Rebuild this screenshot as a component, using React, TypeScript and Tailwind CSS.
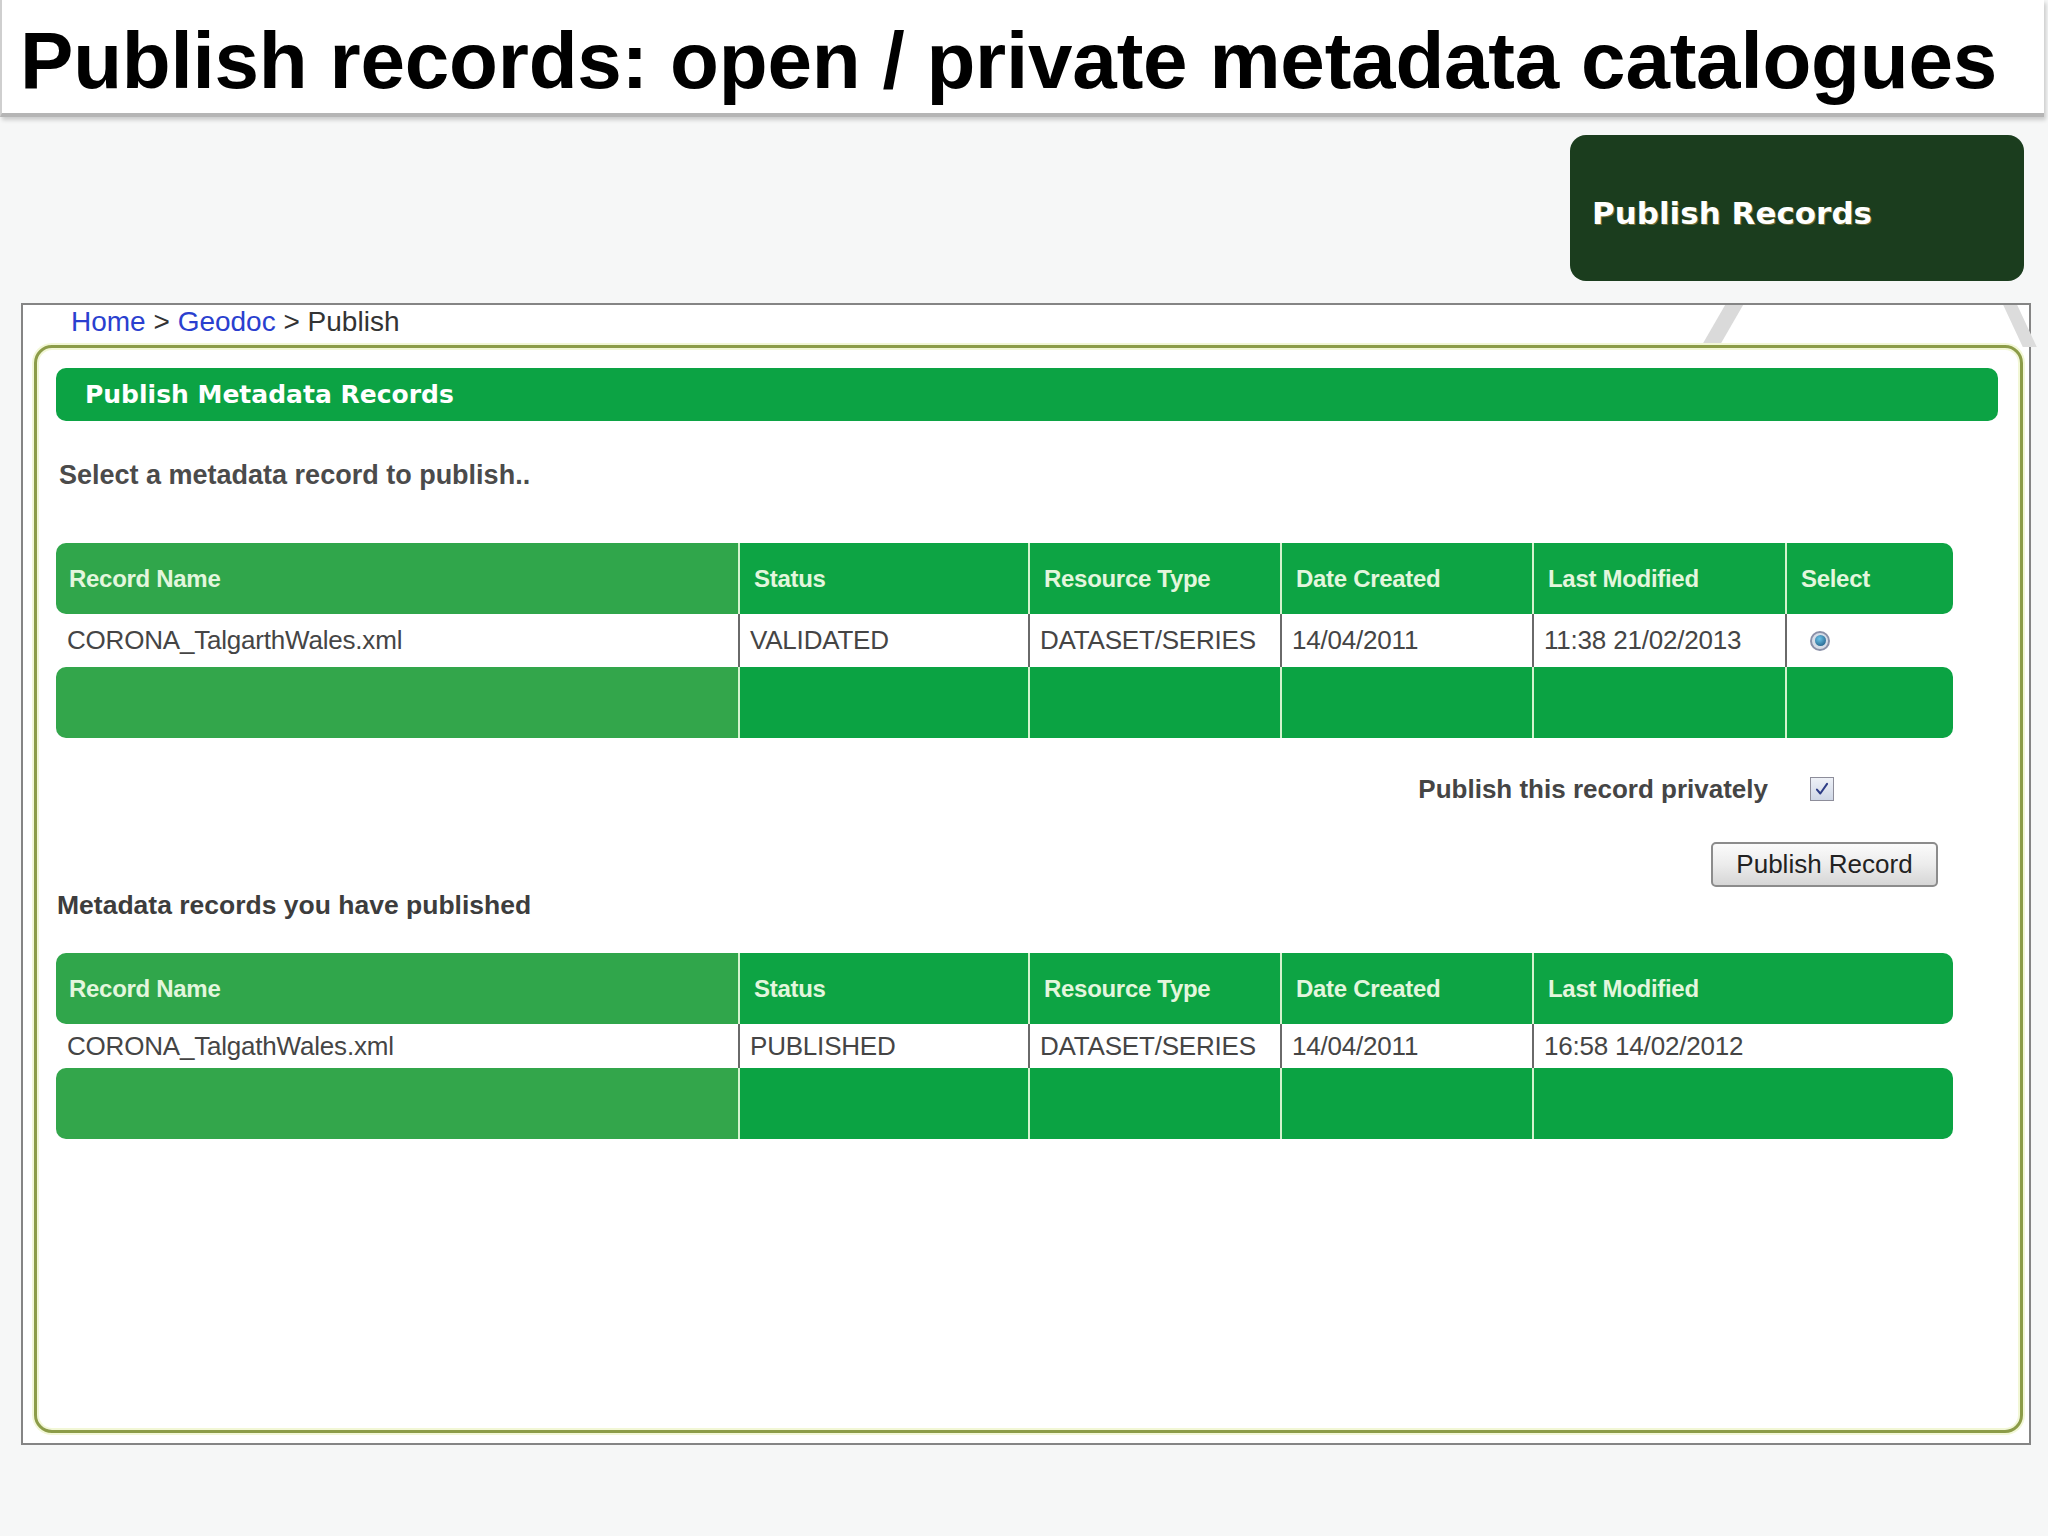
import React from "react";

const cols1 = "grid grid-cols-[682px_290px_252px_252px_253px_168px]";
const cols2 = "grid grid-cols-[682px_290px_252px_252px_421px]";

interface TableProps {
  cols: string;
  headers: string[];
  values: string[];
  rowH: string;
  radio?: boolean;
}

function RecordTable({ cols, headers, values, rowH, radio }: TableProps) {
  return (
    <div className="ml-[19px] w-[1897px]">
      {/* header bar */}
      <div className={`${cols} h-[71px] overflow-hidden rounded-[10px]`}>
        {headers.map((h, i) => (
          <div
            key={h}
            className={
              i === 0
                ? "flex items-center bg-[#30a64b] pl-[13px]"
                : "flex items-center border-l-2 border-[#d3f3cd] bg-[#0da444] pl-[14px]"
            }
          >
            <span className="text-[24px] font-bold tracking-[-0.3px] text-[#e3f6dd]">
              {h}
            </span>
          </div>
        ))}
      </div>

      {/* data row */}
      <div className={`${cols} ${rowH} bg-white`}>
        {values.map((v, i) => (
          <div
            key={i}
            className={
              i === 0
                ? "flex items-center pl-[11px]"
                : "flex items-center border-l-2 border-[#6a6a6a] pl-[10px]"
            }
          >
            <span className="text-[26px] tracking-[-0.2px] text-[#454545]">{v}</span>
          </div>
        ))}
        {radio && (
          <div className="flex items-center border-l-2 border-[#6a6a6a] pl-[23px]">
            <span className="flex h-[20px] w-[20px] items-center justify-center rounded-full border-2 border-[#8a90a8] bg-[#d6dde8]">
              <span className="h-[11px] w-[11px] rounded-full bg-[radial-gradient(circle_at_40%_35%,#6cc4ea,#174f78)]" />
            </span>
          </div>
        )}
      </div>

      {/* footer bar */}
      <div className={`${cols} h-[71px] overflow-hidden rounded-[10px]`}>
        {headers.map((h, i) => (
          <div
            key={h}
            className={
              i === 0
                ? "bg-[#33a64b]"
                : "border-l-2 border-[#d3f3cd] bg-[#0ba343]"
            }
          />
        ))}
      </div>
    </div>
  );
}

export default function App() {
  return (
    <div className="relative h-[1536px] w-[2048px] overflow-hidden bg-[#f6f7f7] font-['Liberation_Sans',Arial,sans-serif]">
      {/* Slide title */}
      <div className="h-[117px] w-[2044px] border-b-4 border-l-2 border-[#b5b5b5] border-l-[#cfcfcf] bg-white pl-[18px] pt-[21px] shadow-[2px_3px_4px_rgba(0,0,0,0.18)]">
        <h1 className="text-[80px] font-bold leading-none tracking-[-0.2px] text-black">
          Publish records: open / private metadata catalogues
        </h1>
      </div>

      {/* Dark label */}
      <div className="mt-[18px] flex justify-end pr-[24px]">
        <div className="flex h-[146px] w-[454px] items-center rounded-[16px] bg-[#1b3d1e] pl-[22px] pt-[10px]">
          <span className="font-['DejaVu_Sans',sans-serif] text-[31px] font-bold text-white [text-shadow:1px_1px_0_rgba(200,160,80,0.5)]">
            Publish Records
          </span>
        </div>
      </div>

      {/* Screenshot panel */}
      <div className="relative ml-[21px] mt-[22px] h-[1142px] w-[2010px] border-2 border-[#858585] bg-white">
        <div className="absolute left-[1690px] top-0 h-[42px] w-[18px] skew-x-[-30deg] bg-[#dadada]" />
        <div className="absolute left-[1990px] top-0 h-[42px] w-[14px] skew-x-[25deg] bg-[#dcdcdc]" />

        <div className="relative h-[40px] pl-[48px] pt-[3px] text-[28px] leading-none">
          <span className="text-[#2a3fcf]">Home</span>
          <span className="text-[#333]"> &gt; </span>
          <span className="text-[#2a3fcf]">Geodoc</span>
          <span className="text-[#333]"> &gt; Publish</span>
        </div>

        <div className="relative ml-[11px] h-[1088px] w-[1989px] rounded-[18px] border-[3px] border-[#8c9c48] bg-white shadow-[inset_0_0_0_2px_#f2f7d6,0_0_0_2px_#f2f7d6]">
          <div className="ml-[19px] mt-[20px] flex h-[53px] w-[1942px] items-center rounded-[10px] bg-[#0ca344] pl-[29px]">
            <span className="font-['DejaVu_Sans',sans-serif] text-[25px] font-bold text-white">
              Publish Metadata Records
            </span>
          </div>

          <p className="ml-[22px] mt-[39px] h-[30px] text-[27px] font-bold leading-[30px] text-[#4b4b4b]">
            Select a metadata record to publish..
          </p>

          <div className="mt-[53px]">
            <RecordTable
              cols={cols1}
              headers={[
                "Record Name",
                "Status",
                "Resource Type",
                "Date Created",
                "Last Modified",
                "Select",
              ]}
              values={[
                "CORONA_TalgarthWales.xml",
                "VALIDATED",
                "DATASET/SERIES",
                "14/04/2011",
                "11:38 21/02/2013",
              ]}
              rowH="h-[53px]"
              radio
            />
          </div>

          <div className="mt-[36px] flex h-[30px] items-center justify-end gap-[42px] pr-[186px]">
            <span className="text-[26px] font-bold text-[#454545]">
              Publish this record privately
            </span>
            <span className="flex h-[24px] w-[24px] items-center justify-center border border-[#8d8d9a] bg-gradient-to-b from-[#eef1f7] to-[#cfd7e6]">
              <svg viewBox="0 0 16 16" className="h-[18px] w-[18px]">
                <path
                  d="M3.5 8.5 L6.5 12 L12.5 3.5"
                  fill="none"
                  stroke="#2e3d86"
                  strokeWidth="1.8"
                  strokeLinecap="round"
                  strokeLinejoin="round"
                />
              </svg>
            </span>
          </div>

          <div className="mt-[38px] flex justify-end pr-[82px]">
            <button className="h-[45px] w-[227px] rounded-[5px] border-2 border-[#8c8c8c] bg-gradient-to-b from-[#fbfbfb] via-[#ececec] to-[#d6d6d6] text-[26px] text-[#222]">
              Publish Record
            </button>
          </div>

          <p className="ml-[20px] mt-[3px] h-[30px] text-[26.5px] font-bold leading-[30px] text-[#3d3d3d]">
            Metadata records you have published
          </p>

          <div className="mt-[33px]">
            <RecordTable
              cols={cols2}
              headers={[
                "Record Name",
                "Status",
                "Resource Type",
                "Date Created",
                "Last Modified",
              ]}
              values={[
                "CORONA_TalgathWales.xml",
                "PUBLISHED",
                "DATASET/SERIES",
                "14/04/2011",
                "16:58 14/02/2012",
              ]}
              rowH="h-[44px]"
            />
          </div>
        </div>
      </div>
    </div>
  );
}
